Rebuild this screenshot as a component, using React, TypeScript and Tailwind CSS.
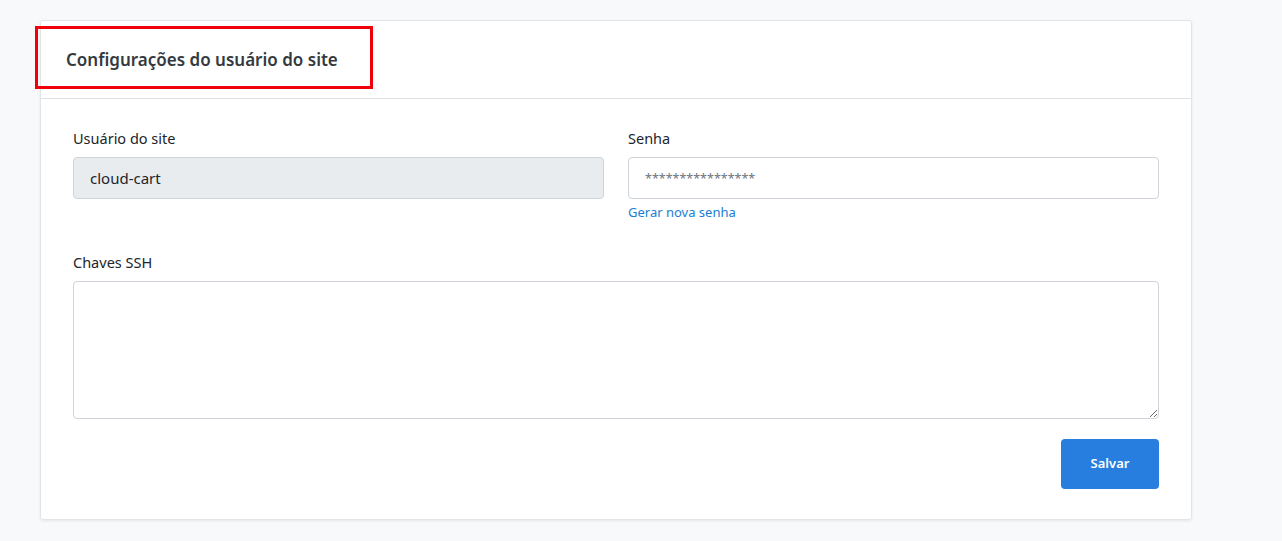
export default function App() {
  return (
    <div
      className="min-h-screen bg-[#f8f9fb] pt-5 pl-10 pr-[90px]"
      style={{ fontFamily: '"Noto Sans", "Open Sans", sans-serif' }}
    >
      <div className="relative bg-white border border-[#e3e4e6] rounded-[3px] shadow-[0_1px_3px_rgba(0,0,0,0.08)]">
        {/* Header */}
        <div className="h-[78px] flex items-center pl-[25px] border-b border-[#e0e1e3]">
          <h2 className="text-[17px] font-semibold text-[#343a40]">
            Configurações do usuário do site
          </h2>
        </div>
        {/* highlight box */}
        <div className="absolute left-[-6px] top-[5px] w-[338px] h-[63px] border-[3px] border-[#f2000a] pointer-events-none" />

        {/* Body */}
        <div className="px-8 pt-[28px] pb-[30px]">
          <div className="grid grid-cols-2 gap-6">
            <div>
              <label className="block text-[14.5px] leading-[22px] text-[#212529] mb-2">
                Usuário do site
              </label>
              <input
                readOnly
                value="cloud-cart"
                className="w-full h-[42px] px-4 rounded-[4px] bg-[#e9ecef] border border-[#ced4da] text-[15px] text-[#212529] outline-none"
              />
            </div>
            <div>
              <label className="block text-[14.5px] leading-[22px] text-[#212529] mb-2">
                Senha
              </label>
              <input
                readOnly
                value="****************"
                className="w-full h-[42px] px-4 rounded-[4px] bg-white border border-[#ced4da] text-[12.5px] text-[#6c757d] outline-none"
              />
              <a className="block mt-[4px] text-[13px] leading-[18px] text-[#1b7ed3] cursor-pointer">
                Gerar nova senha
              </a>
            </div>
          </div>

          <div className="mt-[30px]">
            <label className="block text-[14.5px] leading-[22px] text-[#212529] mb-2">
              Chaves SSH
            </label>
            <textarea className="block w-full h-[138px] rounded-[4px] border border-[#ced4da] bg-white outline-none" />
          </div>

          <div className="flex justify-end mt-5">
            <button className="w-[98px] h-[50px] rounded-[4px] bg-[#277ede] text-white text-[13px] font-semibold">
              Salvar
            </button>
          </div>
        </div>
      </div>
    </div>
  )
}
